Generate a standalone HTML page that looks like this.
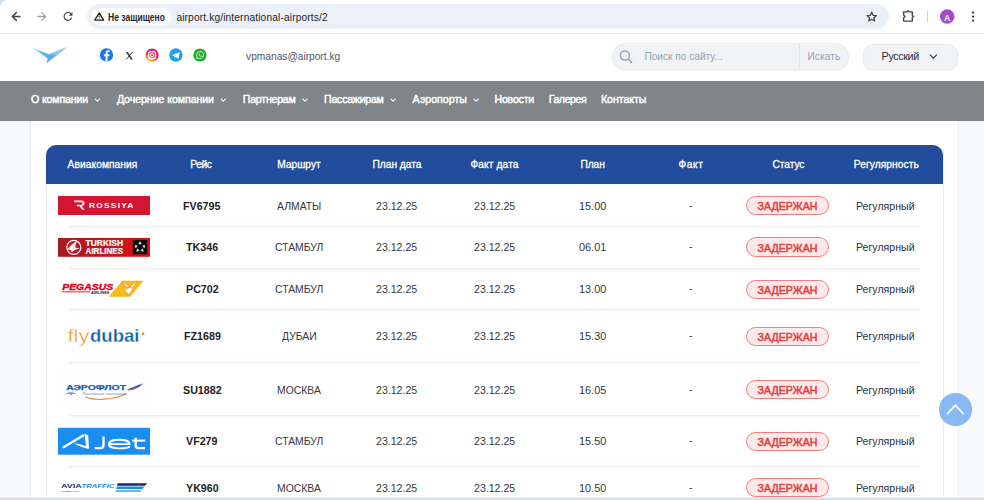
<!DOCTYPE html>
<html><head><meta charset="utf-8"><style>
html,body{margin:0;padding:0;width:984px;height:500px;overflow:hidden;background:#fff;position:relative;font-family:"Liberation Sans",sans-serif}
.t{position:absolute;white-space:nowrap}
svg{display:block}
</style></head><body>
<div style="position:absolute;left:0;top:0;width:984px;height:33px;background:#fff"></div>
<div style="position:absolute;left:0;top:33px;width:984px;height:1px;background:#e3e3e3"></div>
<div style="position:absolute;left:0;top:0;width:6px;height:6px;background:radial-gradient(circle at 6px 6px, rgba(205,220,248,0) 4.5px, #c9dbf8 6.5px)"></div>
<svg style="position:absolute;left:0;top:0" width="984" height="34" viewBox="0 0 984 34"><g fill="none" stroke-linecap="round" stroke-linejoin="round"><path d="M20 16.5H12.5M16.3 12.6L12.3 16.5L16.3 20.4" stroke="#474747" stroke-width="1.5"/><path d="M38 16.5H45.5M41.7 12.6L45.7 16.5L41.7 20.4" stroke="#a0a0a0" stroke-width="1.3"/></g><g transform="translate(61.28,9.68) scale(0.56)"><path d="M17.65 6.35A7.958 7.958 0 0 0 12 4c-4.42 0-7.99 3.58-7.99 8s3.57 8 7.99 8c3.73 0 6.84-2.55 7.73-6h-2.08A5.99 5.99 0 0 1 12 18c-3.31 0-6-2.69-6-6s2.69-6 6-6c1.66 0 3.14.69 4.22 1.78L13 11h7V4l-2.35 2.35z" fill="#474747"/></g></svg>
<div style="position:absolute;left:87px;top:4px;width:802px;height:25px;border-radius:12.5px;background:#ecf0f9"></div>
<div style="position:absolute;left:90.5px;top:8px;width:80.5px;height:17px;border-radius:8.5px;background:#fff"></div>
<svg style="position:absolute;left:93px;top:11px" width="13" height="11" viewBox="0 0 13 11"><path d="M6.2 1.9L10.6 9.2H1.8Z" fill="none" stroke="#1f1f1f" stroke-width="1.3" stroke-linejoin="round"/><path d="M6.2 4.6V6.6M6.2 7.4V8.1" stroke="#1f1f1f" stroke-width="1"/></svg>
<div class="t" style="top:12.64px;font-size:10.0px;line-height:10.0px;color:#1f1f1f;font-weight:bold;left:107.80px;transform:scaleX(0.8546);transform-origin:0 0;">Не защищено</div>
<div class="t" style="top:12.97px;font-size:10.2px;line-height:10.2px;color:#1f1f1f;letter-spacing:0.134px;left:176.40px;">airport.kg/international-airports/2</div>
<svg style="position:absolute;left:0;top:0" width="984" height="34" viewBox="0 0 984 34"><path d="M871.7 12.3L873.1 15.3L876.4 15.6L873.9 17.8L874.6 21L871.7 19.3L868.8 21L869.5 17.8L867 15.6L870.3 15.3Z" fill="none" stroke="#474747" stroke-width="1.3" stroke-linejoin="round"/><path d="M903.6 11.9H907.1L908 10.8L908.9 11.9H912.3V15.6L913.7 16.5L912.3 17.4V21.1H903.6V17.9L905 16.5L903.6 15.1Z" fill="none" stroke="#474747" stroke-width="1.4" stroke-linejoin="round"/></svg>
<div style="position:absolute;left:927px;top:11px;width:1px;height:11px;background:#c2d5f5"></div>
<svg style="position:absolute;left:938px;top:7px" width="20" height="20" viewBox="938 7 20 20"><circle cx="947.2" cy="16.6" r="7.25" fill="#a747c9"/></svg>
<div class="t" style="top:13.72px;font-size:8.6px;line-height:8.6px;color:#fff;font-weight:bold;left:944.09px;">A</div>
<svg style="position:absolute;left:968px;top:8px" width="10" height="18" viewBox="968 8 10 18"><g fill="#333"><circle cx="973.1" cy="12.6" r="1.15"/><circle cx="973.1" cy="16.6" r="1.15"/><circle cx="973.1" cy="20.6" r="1.15"/></g></svg>
<svg style="position:absolute;left:30px;top:45px" width="40" height="21" viewBox="30 45 40 21"><defs><linearGradient id="lg" x1="0" y1="0" x2="1" y2="0.6"><stop offset="0" stop-color="#b5e3fa"/><stop offset="0.45" stop-color="#62b5ef"/><stop offset="1" stop-color="#4ea7ea"/></linearGradient></defs><path d="M31.7 47.2L49 54.3L66.6 47.2L56.5 55.5L46.5 63.3L47.6 58.6Z" fill="url(#lg)"/><path d="M49 54.3L66.6 47.2L56.5 55.5Z" fill="#9fd4f5" opacity="0.6"/></svg>
<svg style="position:absolute;left:96px;top:44px" width="120" height="22" viewBox="96 44 120 22"><defs><radialGradient id="ig" cx="0.25" cy="1.0" r="1.15"><stop offset="0" stop-color="#ffd23a"/><stop offset="0.3" stop-color="#ff9a1f"/><stop offset="0.6" stop-color="#f0264f"/><stop offset="1" stop-color="#b02ab8"/></radialGradient></defs><circle cx="106.5" cy="54.9" r="6.65" fill="#1877f2"/><path d="M107.6 61.5V56.3H109.3L109.6 54.3H107.6V53.1C107.6 52.5 107.9 52.1 108.7 52.1H109.7V50.4C109.4 50.3 108.8 50.3 108.1 50.3C106.6 50.3 105.6 51.2 105.6 52.9V54.3H103.9V56.3H105.6V61.5Z" fill="#fff"/><path d="M125.8 51.9H127.8L132.9 59.5H130.9Z" fill="#3a3a3a"/><path d="M132.5 52L126.3 59.4" stroke="#3a3a3a" stroke-width="1"/><circle cx="152.1" cy="55.1" r="6.6" fill="url(#ig)"/><rect x="148.6" y="51.6" width="7" height="7" rx="2" fill="none" stroke="#fff" stroke-width="1.1"/><circle cx="152.1" cy="55.1" r="1.6" fill="#e8234a" stroke="#fff" stroke-width="1.1"/><circle cx="154" cy="53.1" r="0.45" fill="#fff"/><circle cx="175.9" cy="55.0" r="6.65" fill="#1f9fe4"/><path d="M172 55.1L179.8 51.9L178.5 58.9L175.9 57L174.5 58.2L174.4 56.2L178.1 53.1L173.8 55.9Z" fill="#fff"/><circle cx="199.9" cy="55.0" r="6.6" fill="#22ac2a"/><path d="M196.6 58.4L197.1 56.7A3.5 3.5 0 1 1 198.4 58" fill="none" stroke="#e8f6e8" stroke-width="0.9" stroke-linejoin="round"/><path d="M196.6 58.4L198.4 58" stroke="#e8f6e8" stroke-width="0.9"/><path d="M198.6 53.4C198.4 54.6 199.6 56.4 201.2 56.8L201.9 56.2L201.2 55.6L200.7 55.9C200.2 55.7 199.5 55 199.4 54.6L199.7 54.1L199.2 53.3Z" fill="#e8f6e8"/></svg>
<div class="t" style="top:52.37px;font-size:10.2px;line-height:10.2px;color:#4b5966;letter-spacing:-0.004px;left:246.10px;">vpmanas@airport.kg</div>
<div style="position:absolute;left:612px;top:43px;width:237px;height:27px;border-radius:13.5px;background:#f1f3f6;border:1px solid #e8ebef;box-sizing:border-box;box-shadow:0 1px 2px rgba(0,0,0,0.06)"></div>
<div style="position:absolute;left:799px;top:44px;width:1px;height:25px;background:#e2e5ea"></div>
<svg style="position:absolute;left:617px;top:48px" width="18" height="17" viewBox="0 0 18 17"><circle cx="7.9" cy="7.6" r="4.6" fill="none" stroke="#9aa4af" stroke-width="1.4"/><path d="M11.3 11L14.6 14.3" stroke="#9aa4af" stroke-width="1.5" stroke-linecap="round"/></svg>
<div class="t" style="top:51.77px;font-size:10.2px;line-height:10.2px;color:#9aa1a9;letter-spacing:-0.029px;left:644.40px;">Поиск по сайту...</div>
<div class="t" style="top:51.77px;font-size:10.2px;line-height:10.2px;color:#9aa1a9;letter-spacing:0.089px;left:807.40px;">Искать</div>
<div style="position:absolute;left:863px;top:43.5px;width:95px;height:26px;border-radius:10px;background:#f1f3f6;border:1px solid #e8ebef;box-sizing:border-box;box-shadow:0 1px 2px rgba(0,0,0,0.06)"></div>
<div class="t" style="top:51.26px;font-size:10.8px;line-height:10.8px;color:#2a3038;letter-spacing:-0.412px;left:881.60px;">Русский</div>
<svg style="position:absolute;left:928px;top:52px" width="11" height="9" viewBox="0 0 11 9"><path d="M1.9 2.6L5.4 6.1L8.9 2.6" fill="none" stroke="#333" stroke-width="1.15"/></svg>
<div style="position:absolute;left:0;top:81px;width:984px;height:40px;background:#7f8588"></div>
<div class="t" style="top:94.03px;font-size:10.6px;line-height:10.6px;color:#fff;-webkit-text-stroke:0.45px #fff;letter-spacing:-0.151px;left:31.10px;">О компании</div>
<div class="t" style="top:94.03px;font-size:10.6px;line-height:10.6px;color:#fff;-webkit-text-stroke:0.45px #fff;letter-spacing:-0.060px;left:116.90px;">Дочерние компании</div>
<div class="t" style="top:94.03px;font-size:10.6px;line-height:10.6px;color:#fff;-webkit-text-stroke:0.45px #fff;letter-spacing:-0.232px;left:242.80px;">Партнерам</div>
<div class="t" style="top:94.03px;font-size:10.6px;line-height:10.6px;color:#fff;-webkit-text-stroke:0.45px #fff;letter-spacing:-0.256px;left:324.10px;">Пассажирам</div>
<div class="t" style="top:94.03px;font-size:10.6px;line-height:10.6px;color:#fff;-webkit-text-stroke:0.45px #fff;letter-spacing:0.003px;left:412.60px;">Аэропорты</div>
<div class="t" style="top:94.03px;font-size:10.6px;line-height:10.6px;color:#fff;-webkit-text-stroke:0.45px #fff;letter-spacing:-0.222px;left:494.50px;">Новости</div>
<div class="t" style="top:94.03px;font-size:10.6px;line-height:10.6px;color:#fff;-webkit-text-stroke:0.45px #fff;letter-spacing:-0.425px;left:548.70px;">Галерея</div>
<div class="t" style="top:94.03px;font-size:10.6px;line-height:10.6px;color:#fff;-webkit-text-stroke:0.45px #fff;letter-spacing:-0.027px;left:600.90px;">Контакты</div>
<svg style="position:absolute;left:0;top:0" width="984" height="121" viewBox="0 0 984 121"><g fill="none" stroke="#f3f3f3" stroke-width="1.1"><path d="M94.8 98.6L97.4 101.2L100.0 98.6" /><path d="M220.7 98.6L223.3 101.2L225.9 98.6" /><path d="M302.4 98.6L305.0 101.2L307.6 98.6" /><path d="M390.5 98.6L393.1 101.2L395.7 98.6" /><path d="M473.5 98.6L476.1 101.2L478.7 98.6" /></g></svg>
<div style="position:absolute;left:0;top:121px;width:30px;height:379px;background:#f8f9fb"></div>
<div style="position:absolute;left:30px;top:121px;width:1px;height:379px;background:#eceef1"></div>
<div style="position:absolute;left:958px;top:121px;width:26px;height:379px;background:#f8f9fb"></div>
<div style="position:absolute;left:958px;top:121px;width:1px;height:379px;background:#eceef1"></div>
<div style="position:absolute;left:45.5px;top:150px;width:1px;height:350px;background:#e9ebee"></div>
<div style="position:absolute;left:942.5px;top:150px;width:1px;height:350px;background:#e9ebee"></div>
<div style="position:absolute;left:46px;top:145px;width:897px;height:39px;border-radius:10px 10px 0 0;background:#224c9c"></div>
<div class="t" style="top:160.37px;font-size:10.2px;line-height:10.2px;color:#fff;-webkit-text-stroke:0.3px #fff;letter-spacing:0.090px;left:67.55px;">Авиакомпания</div>
<div class="t" style="top:160.37px;font-size:10.2px;line-height:10.2px;color:#fff;-webkit-text-stroke:0.3px #fff;letter-spacing:-0.442px;left:190.25px;">Рейс</div>
<div class="t" style="top:160.37px;font-size:10.2px;line-height:10.2px;color:#fff;-webkit-text-stroke:0.3px #fff;letter-spacing:-0.012px;left:277.30px;">Маршрут</div>
<div class="t" style="top:160.37px;font-size:10.2px;line-height:10.2px;color:#fff;-webkit-text-stroke:0.3px #fff;letter-spacing:-0.007px;left:372.50px;">План дата</div>
<div class="t" style="top:160.37px;font-size:10.2px;line-height:10.2px;color:#fff;-webkit-text-stroke:0.3px #fff;letter-spacing:0.132px;left:470.40px;">Факт дата</div>
<div class="t" style="top:160.37px;font-size:10.2px;line-height:10.2px;color:#fff;-webkit-text-stroke:0.3px #fff;letter-spacing:-0.063px;left:580.40px;">План</div>
<div class="t" style="top:160.37px;font-size:10.2px;line-height:10.2px;color:#fff;-webkit-text-stroke:0.3px #fff;letter-spacing:0.574px;left:678.50px;">Факт</div>
<div class="t" style="top:160.37px;font-size:10.2px;line-height:10.2px;color:#fff;-webkit-text-stroke:0.3px #fff;letter-spacing:-0.049px;left:772.50px;">Статус</div>
<div class="t" style="top:160.37px;font-size:10.2px;line-height:10.2px;color:#fff;-webkit-text-stroke:0.3px #fff;letter-spacing:0.076px;left:853.80px;">Регулярность</div>
<div style="position:absolute;left:68.5px;top:223px;width:851.5px;height:7px;background:#fcfcfc"></div>
<div style="position:absolute;left:68.5px;top:226px;width:851.5px;height:1px;background:#efefef"></div>
<div style="position:absolute;left:68.5px;top:227px;width:851.5px;height:1px;background:#f7f7f7"></div>
<div style="position:absolute;left:68.5px;top:265px;width:851.5px;height:7px;background:#fcfcfc"></div>
<div style="position:absolute;left:68.5px;top:268px;width:851.5px;height:1px;background:#efefef"></div>
<div style="position:absolute;left:68.5px;top:269px;width:851.5px;height:1px;background:#f7f7f7"></div>
<div style="position:absolute;left:68.5px;top:306px;width:851.5px;height:7px;background:#fcfcfc"></div>
<div style="position:absolute;left:68.5px;top:309px;width:851.5px;height:1px;background:#efefef"></div>
<div style="position:absolute;left:68.5px;top:310px;width:851.5px;height:1px;background:#f7f7f7"></div>
<div style="position:absolute;left:68.5px;top:359px;width:851.5px;height:7px;background:#fcfcfc"></div>
<div style="position:absolute;left:68.5px;top:362px;width:851.5px;height:1px;background:#efefef"></div>
<div style="position:absolute;left:68.5px;top:363px;width:851.5px;height:1px;background:#f7f7f7"></div>
<div style="position:absolute;left:68.5px;top:412px;width:851.5px;height:7px;background:#fcfcfc"></div>
<div style="position:absolute;left:68.5px;top:415px;width:851.5px;height:1px;background:#efefef"></div>
<div style="position:absolute;left:68.5px;top:416px;width:851.5px;height:1px;background:#f7f7f7"></div>
<div style="position:absolute;left:68.5px;top:463px;width:851.5px;height:7px;background:#fcfcfc"></div>
<div style="position:absolute;left:68.5px;top:466px;width:851.5px;height:1px;background:#efefef"></div>
<div style="position:absolute;left:68.5px;top:467px;width:851.5px;height:1px;background:#f7f7f7"></div>
<div class="t" style="top:201.77px;font-size:10.2px;line-height:10.2px;color:#1e2227;font-weight:bold;left:183.24px;transform:scaleX(1.0500);transform-origin:0 0;">FV6795</div>
<div class="t" style="top:201.77px;font-size:10.2px;line-height:10.2px;color:#33383d;left:276.82px;transform:scaleX(1.0200);transform-origin:0 0;">АЛМАТЫ</div>
<div class="t" style="top:201.77px;font-size:10.2px;line-height:10.2px;color:#33383d;left:376.35px;transform:scaleX(1.0402);transform-origin:0 0;">23.12.25</div>
<div class="t" style="top:201.77px;font-size:10.2px;line-height:10.2px;color:#33383d;left:473.85px;transform:scaleX(1.0402);transform-origin:0 0;">23.12.25</div>
<div class="t" style="top:201.77px;font-size:10.2px;line-height:10.2px;color:#33383d;left:579.34px;transform:scaleX(1.0700);transform-origin:0 0;">15.00</div>
<div class="t" style="top:200.77px;font-size:10.2px;line-height:10.2px;color:#33383d;left:689.00px;">-</div>
<div style="position:absolute;left:745.6px;top:196.2px;width:83.3px;height:19.3px;border-radius:10px;background:#fde9e9;border:1px solid #ee7f7f;box-sizing:border-box"></div>
<div class="t" style="top:201.43px;font-size:10.6px;line-height:10.6px;color:#e53e3e;-webkit-text-stroke:0.5px #e53e3e;letter-spacing:0.066px;left:757.50px;">ЗАДЕРЖАН</div>
<div class="t" style="top:201.94px;font-size:10.0px;line-height:10.0px;color:#2c3138;left:855.90px;transform:scaleX(1.0591);transform-origin:0 0;">Регулярный</div>
<div class="t" style="top:242.87px;font-size:10.2px;line-height:10.2px;color:#1e2227;font-weight:bold;left:185.93px;transform:scaleX(1.0500);transform-origin:0 0;">TK346</div>
<div class="t" style="top:242.87px;font-size:10.2px;line-height:10.2px;color:#33383d;left:274.77px;transform:scaleX(1.0200);transform-origin:0 0;">СТАМБУЛ</div>
<div class="t" style="top:242.87px;font-size:10.2px;line-height:10.2px;color:#33383d;left:376.35px;transform:scaleX(1.0402);transform-origin:0 0;">23.12.25</div>
<div class="t" style="top:242.87px;font-size:10.2px;line-height:10.2px;color:#33383d;left:473.85px;transform:scaleX(1.0402);transform-origin:0 0;">23.12.25</div>
<div class="t" style="top:242.87px;font-size:10.2px;line-height:10.2px;color:#33383d;left:579.34px;transform:scaleX(1.0700);transform-origin:0 0;">06.01</div>
<div class="t" style="top:241.87px;font-size:10.2px;line-height:10.2px;color:#33383d;left:689.00px;">-</div>
<div style="position:absolute;left:745.6px;top:237.3px;width:83.3px;height:19.3px;border-radius:10px;background:#fde9e9;border:1px solid #ee7f7f;box-sizing:border-box"></div>
<div class="t" style="top:242.53px;font-size:10.6px;line-height:10.6px;color:#e53e3e;-webkit-text-stroke:0.5px #e53e3e;letter-spacing:0.066px;left:757.50px;">ЗАДЕРЖАН</div>
<div class="t" style="top:243.03px;font-size:10.0px;line-height:10.0px;color:#2c3138;left:855.90px;transform:scaleX(1.0591);transform-origin:0 0;">Регулярный</div>
<div class="t" style="top:285.07px;font-size:10.2px;line-height:10.2px;color:#1e2227;font-weight:bold;left:185.63px;transform:scaleX(1.0500);transform-origin:0 0;">PC702</div>
<div class="t" style="top:285.07px;font-size:10.2px;line-height:10.2px;color:#33383d;left:274.77px;transform:scaleX(1.0200);transform-origin:0 0;">СТАМБУЛ</div>
<div class="t" style="top:285.07px;font-size:10.2px;line-height:10.2px;color:#33383d;left:376.35px;transform:scaleX(1.0402);transform-origin:0 0;">23.12.25</div>
<div class="t" style="top:285.07px;font-size:10.2px;line-height:10.2px;color:#33383d;left:473.85px;transform:scaleX(1.0402);transform-origin:0 0;">23.12.25</div>
<div class="t" style="top:285.07px;font-size:10.2px;line-height:10.2px;color:#33383d;left:579.34px;transform:scaleX(1.0700);transform-origin:0 0;">13.00</div>
<div class="t" style="top:284.07px;font-size:10.2px;line-height:10.2px;color:#33383d;left:689.00px;">-</div>
<div style="position:absolute;left:745.6px;top:279.5px;width:83.3px;height:19.3px;border-radius:10px;background:#fde9e9;border:1px solid #ee7f7f;box-sizing:border-box"></div>
<div class="t" style="top:284.73px;font-size:10.6px;line-height:10.6px;color:#e53e3e;-webkit-text-stroke:0.5px #e53e3e;letter-spacing:0.066px;left:757.50px;">ЗАДЕРЖАН</div>
<div class="t" style="top:285.24px;font-size:10.0px;line-height:10.0px;color:#2c3138;left:855.90px;transform:scaleX(1.0591);transform-origin:0 0;">Регулярный</div>
<div class="t" style="top:332.17px;font-size:10.2px;line-height:10.2px;color:#1e2227;font-weight:bold;left:183.54px;transform:scaleX(1.0500);transform-origin:0 0;">FZ1689</div>
<div class="t" style="top:332.17px;font-size:10.2px;line-height:10.2px;color:#33383d;left:281.61px;transform:scaleX(1.0200);transform-origin:0 0;">ДУБАИ</div>
<div class="t" style="top:332.17px;font-size:10.2px;line-height:10.2px;color:#33383d;left:376.35px;transform:scaleX(1.0402);transform-origin:0 0;">23.12.25</div>
<div class="t" style="top:332.17px;font-size:10.2px;line-height:10.2px;color:#33383d;left:473.85px;transform:scaleX(1.0402);transform-origin:0 0;">23.12.25</div>
<div class="t" style="top:332.17px;font-size:10.2px;line-height:10.2px;color:#33383d;left:579.34px;transform:scaleX(1.0700);transform-origin:0 0;">15.30</div>
<div class="t" style="top:331.17px;font-size:10.2px;line-height:10.2px;color:#33383d;left:689.00px;">-</div>
<div style="position:absolute;left:745.6px;top:326.6px;width:83.3px;height:19.3px;border-radius:10px;background:#fde9e9;border:1px solid #ee7f7f;box-sizing:border-box"></div>
<div class="t" style="top:331.83px;font-size:10.6px;line-height:10.6px;color:#e53e3e;-webkit-text-stroke:0.5px #e53e3e;letter-spacing:0.066px;left:757.50px;">ЗАДЕРЖАН</div>
<div class="t" style="top:332.34px;font-size:10.0px;line-height:10.0px;color:#2c3138;left:855.90px;transform:scaleX(1.0591);transform-origin:0 0;">Регулярный</div>
<div class="t" style="top:385.57px;font-size:10.2px;line-height:10.2px;color:#1e2227;font-weight:bold;left:182.65px;transform:scaleX(1.0500);transform-origin:0 0;">SU1882</div>
<div class="t" style="top:385.57px;font-size:10.2px;line-height:10.2px;color:#33383d;left:277.07px;transform:scaleX(1.0200);transform-origin:0 0;">МОСКВА</div>
<div class="t" style="top:385.57px;font-size:10.2px;line-height:10.2px;color:#33383d;left:376.35px;transform:scaleX(1.0402);transform-origin:0 0;">23.12.25</div>
<div class="t" style="top:385.57px;font-size:10.2px;line-height:10.2px;color:#33383d;left:473.85px;transform:scaleX(1.0402);transform-origin:0 0;">23.12.25</div>
<div class="t" style="top:385.57px;font-size:10.2px;line-height:10.2px;color:#33383d;left:579.34px;transform:scaleX(1.0700);transform-origin:0 0;">16.05</div>
<div class="t" style="top:384.57px;font-size:10.2px;line-height:10.2px;color:#33383d;left:689.00px;">-</div>
<div style="position:absolute;left:745.6px;top:380.0px;width:83.3px;height:19.3px;border-radius:10px;background:#fde9e9;border:1px solid #ee7f7f;box-sizing:border-box"></div>
<div class="t" style="top:385.23px;font-size:10.6px;line-height:10.6px;color:#e53e3e;-webkit-text-stroke:0.5px #e53e3e;letter-spacing:0.066px;left:757.50px;">ЗАДЕРЖАН</div>
<div class="t" style="top:385.74px;font-size:10.0px;line-height:10.0px;color:#2c3138;left:855.90px;transform:scaleX(1.0591);transform-origin:0 0;">Регулярный</div>
<div class="t" style="top:437.07px;font-size:10.2px;line-height:10.2px;color:#1e2227;font-weight:bold;left:186.22px;transform:scaleX(1.0500);transform-origin:0 0;">VF279</div>
<div class="t" style="top:437.07px;font-size:10.2px;line-height:10.2px;color:#33383d;left:274.77px;transform:scaleX(1.0200);transform-origin:0 0;">СТАМБУЛ</div>
<div class="t" style="top:437.07px;font-size:10.2px;line-height:10.2px;color:#33383d;left:376.35px;transform:scaleX(1.0402);transform-origin:0 0;">23.12.25</div>
<div class="t" style="top:437.07px;font-size:10.2px;line-height:10.2px;color:#33383d;left:473.85px;transform:scaleX(1.0402);transform-origin:0 0;">23.12.25</div>
<div class="t" style="top:437.07px;font-size:10.2px;line-height:10.2px;color:#33383d;left:579.34px;transform:scaleX(1.0700);transform-origin:0 0;">15.50</div>
<div class="t" style="top:436.07px;font-size:10.2px;line-height:10.2px;color:#33383d;left:689.00px;">-</div>
<div style="position:absolute;left:745.6px;top:431.5px;width:83.3px;height:19.3px;border-radius:10px;background:#fde9e9;border:1px solid #ee7f7f;box-sizing:border-box"></div>
<div class="t" style="top:436.73px;font-size:10.6px;line-height:10.6px;color:#e53e3e;-webkit-text-stroke:0.5px #e53e3e;letter-spacing:0.066px;left:757.50px;">ЗАДЕРЖАН</div>
<div class="t" style="top:437.24px;font-size:10.0px;line-height:10.0px;color:#2c3138;left:855.90px;transform:scaleX(1.0591);transform-origin:0 0;">Регулярный</div>
<div class="t" style="top:483.57px;font-size:10.2px;line-height:10.2px;color:#1e2227;font-weight:bold;left:185.63px;transform:scaleX(1.0500);transform-origin:0 0;">YK960</div>
<div class="t" style="top:483.57px;font-size:10.2px;line-height:10.2px;color:#33383d;left:277.07px;transform:scaleX(1.0200);transform-origin:0 0;">МОСКВА</div>
<div class="t" style="top:483.57px;font-size:10.2px;line-height:10.2px;color:#33383d;left:376.35px;transform:scaleX(1.0402);transform-origin:0 0;">23.12.25</div>
<div class="t" style="top:483.57px;font-size:10.2px;line-height:10.2px;color:#33383d;left:473.85px;transform:scaleX(1.0402);transform-origin:0 0;">23.12.25</div>
<div class="t" style="top:483.57px;font-size:10.2px;line-height:10.2px;color:#33383d;left:579.34px;transform:scaleX(1.0700);transform-origin:0 0;">10.50</div>
<div class="t" style="top:482.57px;font-size:10.2px;line-height:10.2px;color:#33383d;left:689.00px;">-</div>
<div style="position:absolute;left:745.6px;top:478.0px;width:83.3px;height:19.3px;border-radius:10px;background:#fde9e9;border:1px solid #ee7f7f;box-sizing:border-box"></div>
<div class="t" style="top:483.23px;font-size:10.6px;line-height:10.6px;color:#e53e3e;-webkit-text-stroke:0.5px #e53e3e;letter-spacing:0.066px;left:757.50px;">ЗАДЕРЖАН</div>
<div class="t" style="top:483.74px;font-size:10.0px;line-height:10.0px;color:#2c3138;left:855.90px;transform:scaleX(1.0591);transform-origin:0 0;">Регулярный</div>
<div style="position:absolute;left:939px;top:393px;width:32.5px;height:32.5px;border-radius:50%;background:rgba(105,165,242,0.78)"></div>
<svg style="position:absolute;left:939px;top:393px" width="33" height="33" viewBox="0 0 33 33"><path d="M8 21L16.3 12.3L24.6 21" fill="none" stroke="#fff" stroke-width="1.8"/></svg>
<div style="position:absolute;left:0;top:497px;width:984px;height:3px;background:linear-gradient(#eaf2f6 0,#eaf2f6 1px,#d5e4ec 1px)"></div><svg style="position:absolute;left:0;top:0" width="984" height="500" viewBox="0 0 984 500">
<defs>
<linearGradient id="tkg" x1="0" x2="1" y1="0" y2="0"><stop offset="0" stop-color="#a51d22"/><stop offset="1" stop-color="#e10d18"/></linearGradient>
</defs>
<!-- Rossiya -->
<rect x="58" y="196" width="92" height="19" fill="#d51431"/>
<path d="M73.6 200.6H81.2C83.6 200.6 84.6 201.8 84.6 203.3C84.6 204.9 83.4 205.8 81.6 206.1L84.6 209.7H82.2L79.5 206.3H77.2L76.3 204.8H81.1C82 204.8 82.5 204.2 82.5 203.5C82.5 202.8 82 202.3 81 202.3H74.6Z" fill="#fff"/>
<text x="89" y="208.1" font-family="Liberation Sans" font-weight="bold" font-size="6.8" letter-spacing="1" fill="#fff" textLength="45.6" lengthAdjust="spacingAndGlyphs">ROSSIYA</text>
<!-- Turkish -->
<rect x="58" y="238" width="92" height="18.8" fill="url(#tkg)"/>
<circle cx="73.8" cy="247.4" r="7.6" fill="#fff"/>
<circle cx="73.8" cy="247.4" r="6.4" fill="#c8161d"/>
<path d="M67.4 249.6C70 246 73.4 242.6 77.6 241C75.6 243.6 75 245.6 75.6 247.8L79.8 248.2C76.8 249 74 250.2 71.4 252.2C71.8 250.6 70.8 249.8 67.4 249.6Z" fill="#fff"/>
<text x="85.6" y="246.4" font-family="Liberation Sans" font-weight="bold" font-size="8.2" fill="#fff" stroke="#fff" stroke-width="0.2" textLength="37.4" lengthAdjust="spacingAndGlyphs">TURKISH</text>
<text x="85.6" y="254.4" font-family="Liberation Sans" font-weight="bold" font-size="8.2" fill="#fff" stroke="#fff" stroke-width="0.2" textLength="37.4" lengthAdjust="spacingAndGlyphs">AIRLINES</text>
<rect x="132.8" y="239.9" width="14.4" height="14.4" fill="#0d0d0d"/>
<g fill="#e0e0e0" stroke="#e0e0e0" stroke-width="0.6" stroke-linejoin="round">
<path d="M140 241.6L141.3 243.9H138.7Z"/>
<path d="M145 245.4L144.2 247.9L142.8 245.8Z"/>
<path d="M143.2 251.4L140.8 250.4L142.6 248.8Z"/>
<path d="M136.8 251.4L137.4 248.8L139.2 250.4Z"/>
<path d="M135 245.4L137.2 245.8L135.8 247.9Z"/>
</g>
<!-- Pegasus -->
<text x="62.2" y="289.6" font-family="Liberation Sans" font-weight="bold" font-style="italic" font-size="8.2" fill="#e3001b" stroke="#e3001b" stroke-width="0.35" textLength="51" lengthAdjust="spacingAndGlyphs">PEGASUS</text>
<rect x="62" y="291.4" width="28" height="0.9" fill="#e3001b"/>
<text x="91" y="293.9" font-family="Liberation Sans" font-weight="bold" font-size="3.2" fill="#222" textLength="18.4" lengthAdjust="spacingAndGlyphs">AIRLINES</text>
<path d="M122.2 280.8H143.8L130.2 296.8H108.6Z" fill="#f6bb16"/>
<path d="M121.8 281.6C123.5 283.5 125 285.3 126.8 287.6L128.6 286.2C127 284.3 124.6 282.6 121.8 281.6Z" fill="#fff" stroke="#ec6a2c" stroke-width="0.55"/>
<path d="M137 281.2C134.2 282.8 131.8 285 129.8 287.2L131.4 288.6C133.6 286.4 135.6 284 137 281.2Z" fill="#fff" stroke="#ec6a2c" stroke-width="0.55"/>
<path d="M124.6 290.2C126.6 288.2 129.6 287 132.8 287.8C132.4 290.4 130.6 292.8 128.4 294.4L126.8 295.6L127.6 293.2C126.6 292.4 125.6 291.4 124.6 290.2Z" fill="#fff" stroke="#ec6a2c" stroke-width="0.55"/>
<!-- flydubai -->
<text x="67.5" y="341.6" font-family="Liberation Sans" font-size="18.5" fill="#f39a1e" stroke="#fff" stroke-width="0.35" textLength="22" lengthAdjust="spacingAndGlyphs">fly</text>
<text x="90" y="341.6" font-family="Liberation Sans" font-weight="bold" font-size="18.5" fill="#0a62a9" stroke="#fff" stroke-width="0.3" textLength="49.5" lengthAdjust="spacingAndGlyphs">dubai</text>
<circle cx="143" cy="333.9" r="1.4" fill="#f7931e"/>
<!-- Aeroflot -->
<rect x="58" y="374" width="90" height="30" fill="#fefefe"/>
<text x="66.2" y="389.9" font-family="Liberation Sans" font-weight="bold" font-size="7.1" fill="#1f5fb0" stroke="#1f5fb0" stroke-width="0.25" textLength="59.9" lengthAdjust="spacingAndGlyphs">АЭРОФЛОТ</text>
<path d="M127 389.8C132 387.6 137 385.2 142.6 383.6C141.2 385.4 139.8 386.6 138 387.6C134.6 388.8 131 389.6 127 389.8Z" fill="#2855a8"/>
<path d="M130.5 388.2C134.5 386.6 138.5 385 142.6 383.6C140 384.2 136.5 385.4 133 386.8Z" fill="#fff"/>
<path d="M127 389.8C131 389.6 134.6 388.8 138 387.6C135.6 389.2 132.5 390.2 128.8 390.4Z" fill="#d9252e"/>
<path d="M85.5 397C94 400.5 110 401 126.5 393.8" fill="none" stroke="#f08a2a" stroke-width="1.2"/>
<text x="82.4" y="395.2" font-family="Liberation Sans" font-style="italic" font-size="3.4" fill="#3c6fc0" textLength="43.7" lengthAdjust="spacing">Российские авиалинии</text>
<path d="M66 393.5H75.8M68.5 392.4H73.3M69.5 394.6H72.3" stroke="#4a7cc8" stroke-width="0.7"/>
<!-- AlJet -->
<rect x="58" y="427.8" width="92" height="26.9" fill="#1a8df0"/>
<path d="M63.6 447.2L83.2 435.6" stroke="#fff" stroke-width="2.3" stroke-linecap="round"/>
<path d="M84.4 433.4L88.2 435.4L89 448.4L86.2 446.8Z" fill="#fff"/>
<path d="M73.8 443.6C79 443.8 84.5 445.2 89.2 447.6L88.6 449C83.6 447.8 78.6 446.2 73.8 443.6Z" fill="#fff"/>
<g fill="none" stroke="#fff">
<path d="M103.5 436.5V445.2C103.5 447.3 102.3 448.1 100.2 448.1H94.6" stroke-width="2.3"/>
<path d="M129.9 446.4C128.6 447.9 124.6 448.4 119.2 448.4C113 448.4 108.8 446.6 108.8 444.2C108.8 441.6 113 439.8 119.2 439.8C125.4 439.8 129.6 441.6 129.6 444.1H109" stroke-width="1.9"/>
<path d="M135.7 437.7V445.6C135.7 447.4 136.8 448.2 138.6 448.2H145" stroke-width="2.3"/>
<path d="M132 440.6H145.3" stroke-width="2"/>
</g>
<!-- Aviatraffic -->
<text x="61" y="487.5" font-family="Liberation Sans" font-weight="bold" font-size="5.3" fill="#2b2a78" textLength="20.6" lengthAdjust="spacingAndGlyphs">AVIA</text>
<text x="81.6" y="487.5" font-family="Liberation Sans" font-weight="bold" font-style="italic" font-size="5.3" fill="#1f8fdf" textLength="32.7" lengthAdjust="spacingAndGlyphs">TRAFFIC</text>
<text x="61" y="492.3" font-family="Liberation Sans" font-weight="bold" font-size="2.5" fill="#666" textLength="19" lengthAdjust="spacingAndGlyphs">COMPANY</text>
<path d="M117.6 483.3H147L145.1 485.7H117Z" fill="#26256c"/>
<path d="M116.8 486.6H144.4L142.6 489.1H116.2Z" fill="#1e8cd8"/>
<path d="M116 489.9H141.9L140.2 492H115.4Z" fill="#62bdee"/>
</svg>

</body></html>
